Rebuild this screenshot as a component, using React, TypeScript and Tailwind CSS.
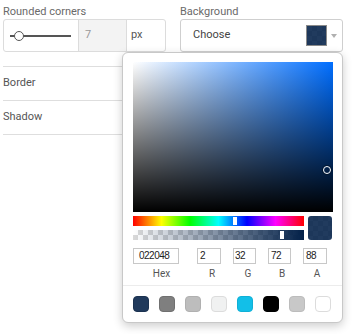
import React from "react";

const checker =
  "bg-[conic-gradient(#d9d9d9_25%,#fff_0_50%,#d9d9d9_0_75%,#fff_0)] bg-[length:10px_10px]";

function NumBox({ w, pl, value }: { w: string; pl: string; value: string }) {
  return (
    <div
      className={`${w} ${pl} h-[16px] border border-[#c8c8c8] bg-white text-[10px] leading-[14px] text-[#222] tracking-[-0.5px] font-['Liberation_Sans',Arial,sans-serif]`}
    >
      {value}
    </div>
  );
}

export default function App() {
  const swatches = [
    "bg-[#203a5c] border-[#1b3250]",
    "bg-[#7f7f7f] border-[#707070]",
    "bg-[#bdbdbd] border-[#b0b0b0]",
    "bg-[#f0f1f1] border-[#dcdcdc]",
    "bg-[#12bfe8] border-[#10b0d6]",
    "bg-[#000000] border-[#000000]",
    "bg-[#c8c8c8] border-[#bcbcbc]",
    "bg-[#ffffff] border-[#dcdcdc]",
  ];
  return (
    <div className="relative w-[353px] h-[334px] bg-white overflow-hidden font-['Roboto',sans-serif]">
      <div className="flex px-[3px] pt-[5px] gap-[14px]">
        {/* left column */}
        <div className="w-[163px] flex flex-col">
          <div className="text-[11px] leading-[14px] text-[#6a6a6a]">Rounded corners</div>
          <div className="h-[33px] flex border border-[#dcdcdc] rounded-[3px]">
            <div className="relative w-[74px]">
              <div className="absolute left-[6px] w-[61px] top-[15px] h-[2px] bg-[#555]" />
              <div className="absolute left-[10px] top-[11px] w-[10px] h-[10px] rounded-full bg-white border-[1.5px] border-[#555]" />
            </div>
            <div className="w-[48px] border-l border-[#dcdcdc] bg-[#f3f3f3] pl-[6px] flex items-center text-[11px] text-[#999]">
              7
            </div>
            <div className="flex-1 border-l border-[#dcdcdc] pl-[4px] flex items-center text-[11px] text-[#555]">
              px
            </div>
          </div>
          <div className="mt-[14px] border-t border-[#dedede] h-[34px] flex items-center text-[11px] text-[#555]">
            Border
          </div>
          <div className="border-t border-b border-[#dedede] h-[35px] flex items-center text-[11px] text-[#555]">
            Shadow
          </div>
        </div>
        {/* right column */}
        <div className="w-[163px] flex flex-col">
          <div className="text-[11px] leading-[14px] text-[#6a6a6a]">Background</div>
          <div className="h-[33px] flex items-center border border-[#cfcfcf] rounded-[3px] pl-[12px] pr-[5px]">
            <span className="text-[11px] text-[#444]">Choose</span>
            <div className={`ml-auto relative w-[21px] h-[21px] border border-[#8a8a8a] ${checker}`}>
              <div className="absolute inset-0 bg-[rgba(2,32,72,0.88)]" />
            </div>
            <div className="ml-[4px] w-0 h-0 border-l-[3px] border-r-[3px] border-t-[4px] border-l-transparent border-r-transparent border-t-[#b0b0b0]" />
          </div>
        </div>
      </div>

      {/* color picker popup */}
      <div className="absolute left-[122px] top-[52px] w-[221px] h-[271px] bg-white border border-[#c8c8c8] rounded-[6px] shadow-[0_3px_10px_rgba(0,0,0,0.2)]">
        <div className="px-[10px] pt-[9px] pb-[5px] border-b border-[#ececec]">
          <div className="relative w-[200px] h-[150px] bg-[linear-gradient(to_right,#fff,#006eff)]">
            <div className="absolute inset-0 bg-[linear-gradient(to_top,#000,rgba(0,0,0,0))]" />
            <div className="absolute left-[190px] top-[104px] w-[8px] h-[8px] rounded-full border-[1.5px] border-white shadow-[0_0_0_1px_rgba(0,0,0,0.35)]" />
          </div>
          <div className="mt-[4px] flex gap-[4px]">
            <div className="w-[172px] flex flex-col gap-[4px]">
              <div className="relative h-[10px] bg-[linear-gradient(to_right,#f00,#ff0,#0f0,#0ff,#00f,#f0f,#f00)]">
                <div className="absolute left-[100px] top-[1px] bottom-[1px] w-[4px] bg-white" />
              </div>
              <div className={`relative h-[10px] ${checker}`}>
                <div className="absolute inset-0 bg-[linear-gradient(to_right,rgba(2,32,72,0),rgb(2,32,72))]" />
                <div className="absolute left-[147px] top-[1px] bottom-[1px] w-[4px] bg-white" />
              </div>
            </div>
            <div className={`relative w-[24px] h-[24px] rounded-[3px] overflow-hidden ${checker}`}>
              <div className="absolute inset-0 bg-[rgba(2,32,72,0.88)]" />
            </div>
          </div>
          <div className="mt-[8px] flex text-[10px] leading-[12px] text-[#555]">
            <div className="w-[57px] flex flex-col">
              <NumBox w="w-[46px]" pl="pl-[5px]" value="022048" />
              <div className="mt-[4px] text-center">Hex</div>
            </div>
            <div className="ml-[7px] w-[30px] flex flex-col">
              <NumBox w="w-[24px]" pl="pl-[2px]" value="2" />
              <div className="mt-[4px] text-center">R</div>
            </div>
            <div className="ml-[6px] w-[30px] flex flex-col">
              <NumBox w="w-[23px]" pl="pl-[1px]" value="32" />
              <div className="mt-[4px] text-center">G</div>
            </div>
            <div className="ml-[5px] w-[28px] flex flex-col">
              <NumBox w="w-[23px]" pl="pl-[2px]" value="72" />
              <div className="mt-[4px] text-center">B</div>
            </div>
            <div className="ml-[7px] w-[28px] flex flex-col">
              <NumBox w="w-[24px]" pl="pl-[2px]" value="88" />
              <div className="mt-[4px] text-center">A</div>
            </div>
          </div>
        </div>
        <div className="px-[10px] pt-[10px] flex gap-[10px]">
          {swatches.map((c, i) => (
            <div key={i} className={`w-[16px] h-[16px] rounded-[4px] border ${c}`} />
          ))}
        </div>
      </div>
    </div>
  );
}
